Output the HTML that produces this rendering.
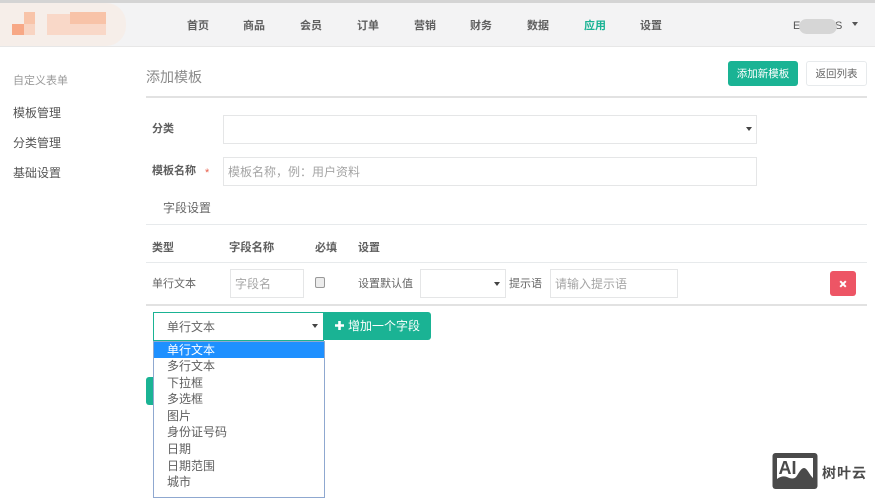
<!DOCTYPE html>
<html><head><meta charset="utf-8">
<style>
*{box-sizing:border-box}
html,body{margin:0;padding:0;width:875px;height:500px;overflow:hidden;background:#fff;font-family:"Liberation Sans","Noto Sans CJK SC",sans-serif;color:#676a6c}
#w{position:absolute;left:0;top:0;width:875px;height:500px;filter:blur(.35px)}
.a{position:absolute;white-space:nowrap;line-height:16px}
.b{font-weight:700}
.in{position:absolute;background:#fff;border:1px solid #e5e6e7}
.ph{color:#a5a5a5}
.hr{position:absolute;background:#e7eaec}
.arr{position:absolute;width:0;height:0;border-left:3px solid transparent;border-right:3px solid transparent;border-top:4px solid #444}
.opt{position:absolute;left:154px;width:169px;height:16.6px;line-height:16.6px;padding-left:13px;font-size:12px;color:#5f5f5f;white-space:nowrap}
</style></head><body><div id="w">
<div style="position:absolute;left:0;top:0;width:875px;height:47px;background:#f3f3f4;border-top:3px solid #d4d4d4;border-bottom:1px solid #e7e7e7"></div>
<div style="position:absolute;left:0;top:3px;width:126px;height:43px;background:#f6eee9;border-radius:0 20px 20px 0"></div>
<div style="position:absolute;left:12px;top:24px;width:12px;height:11px;background:#f7a886"></div>
<div style="position:absolute;left:24px;top:12px;width:11px;height:12px;background:#f8c4a9"></div>
<div style="position:absolute;left:24px;top:24px;width:11px;height:11px;background:#f8d4c2"></div>
<div style="position:absolute;left:47px;top:14px;width:59px;height:21px;background:#f9d8c8"></div>
<div style="position:absolute;left:70px;top:12px;width:36px;height:12px;background:#f8c3a8"></div>
<div class="a b" style="left:187px;top:18px;font-size:11px;color:#5f5f5f">首页</div>
<div class="a b" style="left:243px;top:18px;font-size:11px;color:#5f5f5f">商品</div>
<div class="a b" style="left:300px;top:18px;font-size:11px;color:#5f5f5f">会员</div>
<div class="a b" style="left:357px;top:18px;font-size:11px;color:#5f5f5f">订单</div>
<div class="a b" style="left:414px;top:18px;font-size:11px;color:#5f5f5f">营销</div>
<div class="a b" style="left:470px;top:18px;font-size:11px;color:#5f5f5f">财务</div>
<div class="a b" style="left:527px;top:18px;font-size:11px;color:#5f5f5f">数据</div>
<div class="a b" style="left:584px;top:18px;font-size:11px;color:#1ab394">应用</div>
<div class="a b" style="left:640px;top:18px;font-size:11px;color:#5f5f5f">设置</div>
<div class="a" style="left:793px;top:18px;font-size:11px;color:#555">E</div>
<div class="a" style="left:835px;top:18px;font-size:11px;color:#555">S</div>
<div style="position:absolute;left:799px;top:19px;width:38px;height:15px;background:#d6d6d6;border-radius:8px"></div>
<div class="arr" style="left:852px;top:22px;border-top-color:#555"></div>

<div class="a" style="left:13px;top:73px;font-size:11px;color:#9a9a9a">自定义表单</div>
<div class="a" style="left:13px;top:105px;font-size:12px;color:#555">模板管理</div>
<div class="a" style="left:13px;top:135px;font-size:12px;color:#555">分类管理</div>
<div class="a" style="left:13px;top:165px;font-size:12px;color:#555">基础设置</div>

<div class="a" style="left:146px;top:69px;font-size:14px;color:#8a8a8a">添加模板</div>
<div style="position:absolute;left:728px;top:61px;width:70px;height:25px;background:#1ab394;border-radius:3px;color:#fff;font-size:10.5px;line-height:26px;text-align:center">添加新模板</div>
<div style="position:absolute;left:806px;top:61px;width:61px;height:25px;background:#fff;border:1px solid #e7eaec;border-radius:3px;color:#666;font-size:10.5px;line-height:25px;text-align:center">返回列表</div>
<div class="hr" style="left:146px;top:96px;width:721px;height:2px;background:#e2e2e2"></div>

<div class="a b" style="left:152px;top:121px;font-size:11px;color:#5f5f5f">分类</div>
<div class="in" style="left:223px;top:115px;width:534px;height:29px"></div>
<div class="arr" style="left:746px;top:127px"></div>
<div class="a b" style="left:152px;top:163px;font-size:11px;color:#5f5f5f">模板名称</div>
<div class="a" style="left:205px;top:165px;font-size:11px;color:#e8604c">*</div>
<div class="in" style="left:223px;top:157px;width:534px;height:29px"></div>
<div class="a ph" style="left:228px;top:164px;font-size:12px">模板名称，例：用户资料</div>

<div class="a" style="left:163px;top:200px;font-size:12px;color:#666">字段设置</div>
<div class="hr" style="left:146px;top:224px;width:721px;height:1px"></div>
<div class="a b" style="left:152px;top:240px;font-size:11px;color:#5f5f5f">类型</div>
<div class="a b" style="left:229px;top:240px;font-size:11.3px;color:#5f5f5f">字段名称</div>
<div class="a b" style="left:315px;top:240px;font-size:11px;color:#5f5f5f">必填</div>
<div class="a b" style="left:358px;top:240px;font-size:11px;color:#5f5f5f">设置</div>
<div class="hr" style="left:146px;top:262px;width:721px;height:1px"></div>
<div class="a" style="left:152px;top:276px;font-size:11px;color:#666">单行文本</div>
<div class="in" style="left:230px;top:269px;width:74px;height:29px"></div>
<div class="a ph" style="left:235px;top:276px;font-size:12px">字段名</div>
<div style="position:absolute;left:315px;top:277px;width:10px;height:11px;border:1px solid #999;border-radius:2px;background:#ececec"></div>
<div class="a" style="left:358px;top:276px;font-size:11px;color:#666">设置默认值</div>
<div class="in" style="left:420px;top:269px;width:86px;height:29px"></div>
<div class="arr" style="left:494px;top:282px"></div>
<div class="a" style="left:509px;top:276px;font-size:11px;color:#666">提示语</div>
<div class="in" style="left:550px;top:269px;width:128px;height:29px"></div>
<div class="a ph" style="left:555px;top:276px;font-size:12px">请输入提示语</div>
<div style="position:absolute;left:830px;top:271px;width:26px;height:25px;background:#ed5565;border-radius:3px"></div>
<svg style="position:absolute;left:839px;top:280px" width="8" height="8" viewBox="0 0 8 8"><path d="M1.2 1.2L6.8 6.8M6.8 1.2L1.2 6.8" stroke="#fff" stroke-width="2"/></svg>
<div class="hr" style="left:146px;top:304px;width:721px;height:2px;background:#e2e2e2"></div>

<div style="position:absolute;left:153px;top:312px;width:171px;height:29px;background:#fff;border:1px solid #1ab394"></div>
<div class="a" style="left:167px;top:319px;font-size:12px;color:#666">单行文本</div>
<div class="arr" style="left:312px;top:324px"></div>
<div style="position:absolute;left:324px;top:312px;width:107px;height:28px;background:#1ab394;border-radius:0 3px 3px 0;color:#fff;font-size:12px;line-height:28px;white-space:nowrap"><svg style="position:absolute;left:10px;top:8px" width="11" height="11" viewBox="0 0 11 11"><path d="M5.5 1V10M1 5.5H10" stroke="#fff" stroke-width="2.6"/></svg><span style="position:absolute;left:24px;top:0">增加一个字段</span></div>
<div style="position:absolute;left:146px;top:377px;width:10px;height:28px;background:#1ab394;border-radius:3px 0 0 3px"></div>

<div style="position:absolute;left:153px;top:341px;width:172px;height:157px;background:#fff;border:1px solid #8fa8d0"></div>
<div style="position:absolute;left:154px;top:342px;width:170px;height:16px;background:#1e90ff"></div>
<div class="opt" style="top:341.5px;color:#fff">单行文本</div>
<div class="opt" style="top:358px">多行文本</div>
<div class="opt" style="top:374.6px">下拉框</div>
<div class="opt" style="top:391.2px">多选框</div>
<div class="opt" style="top:407.8px">图片</div>
<div class="opt" style="top:424.4px">身份证号码</div>
<div class="opt" style="top:441px">日期</div>
<div class="opt" style="top:457.6px">日期范围</div>
<div class="opt" style="top:474.2px">城市</div>

<svg style="position:absolute;left:772px;top:453px" width="46" height="36" viewBox="0 0 46 36">
<rect x=".5" width="45" height="36" rx="3" fill="#4a4a4a"/>
<rect x="5" y="5" width="36" height="26" fill="#fff"/>
<path d="M5 31V26C9 23 12 23 15 24C19 26 22 26 24 24C27 20 29 15 32 15C35 15 37 21 41 25V31Z" fill="#4a4a4a"/>
<text x="6.5" y="21" font-family="Liberation Sans" font-weight="700" font-size="18" fill="#4a4a4a">AI</text>
</svg>
<div class="a" style="left:822px;top:465px;font-size:14px;font-weight:700;letter-spacing:1px;color:#4a4a4a">树叶云</div>
</div></body></html>
